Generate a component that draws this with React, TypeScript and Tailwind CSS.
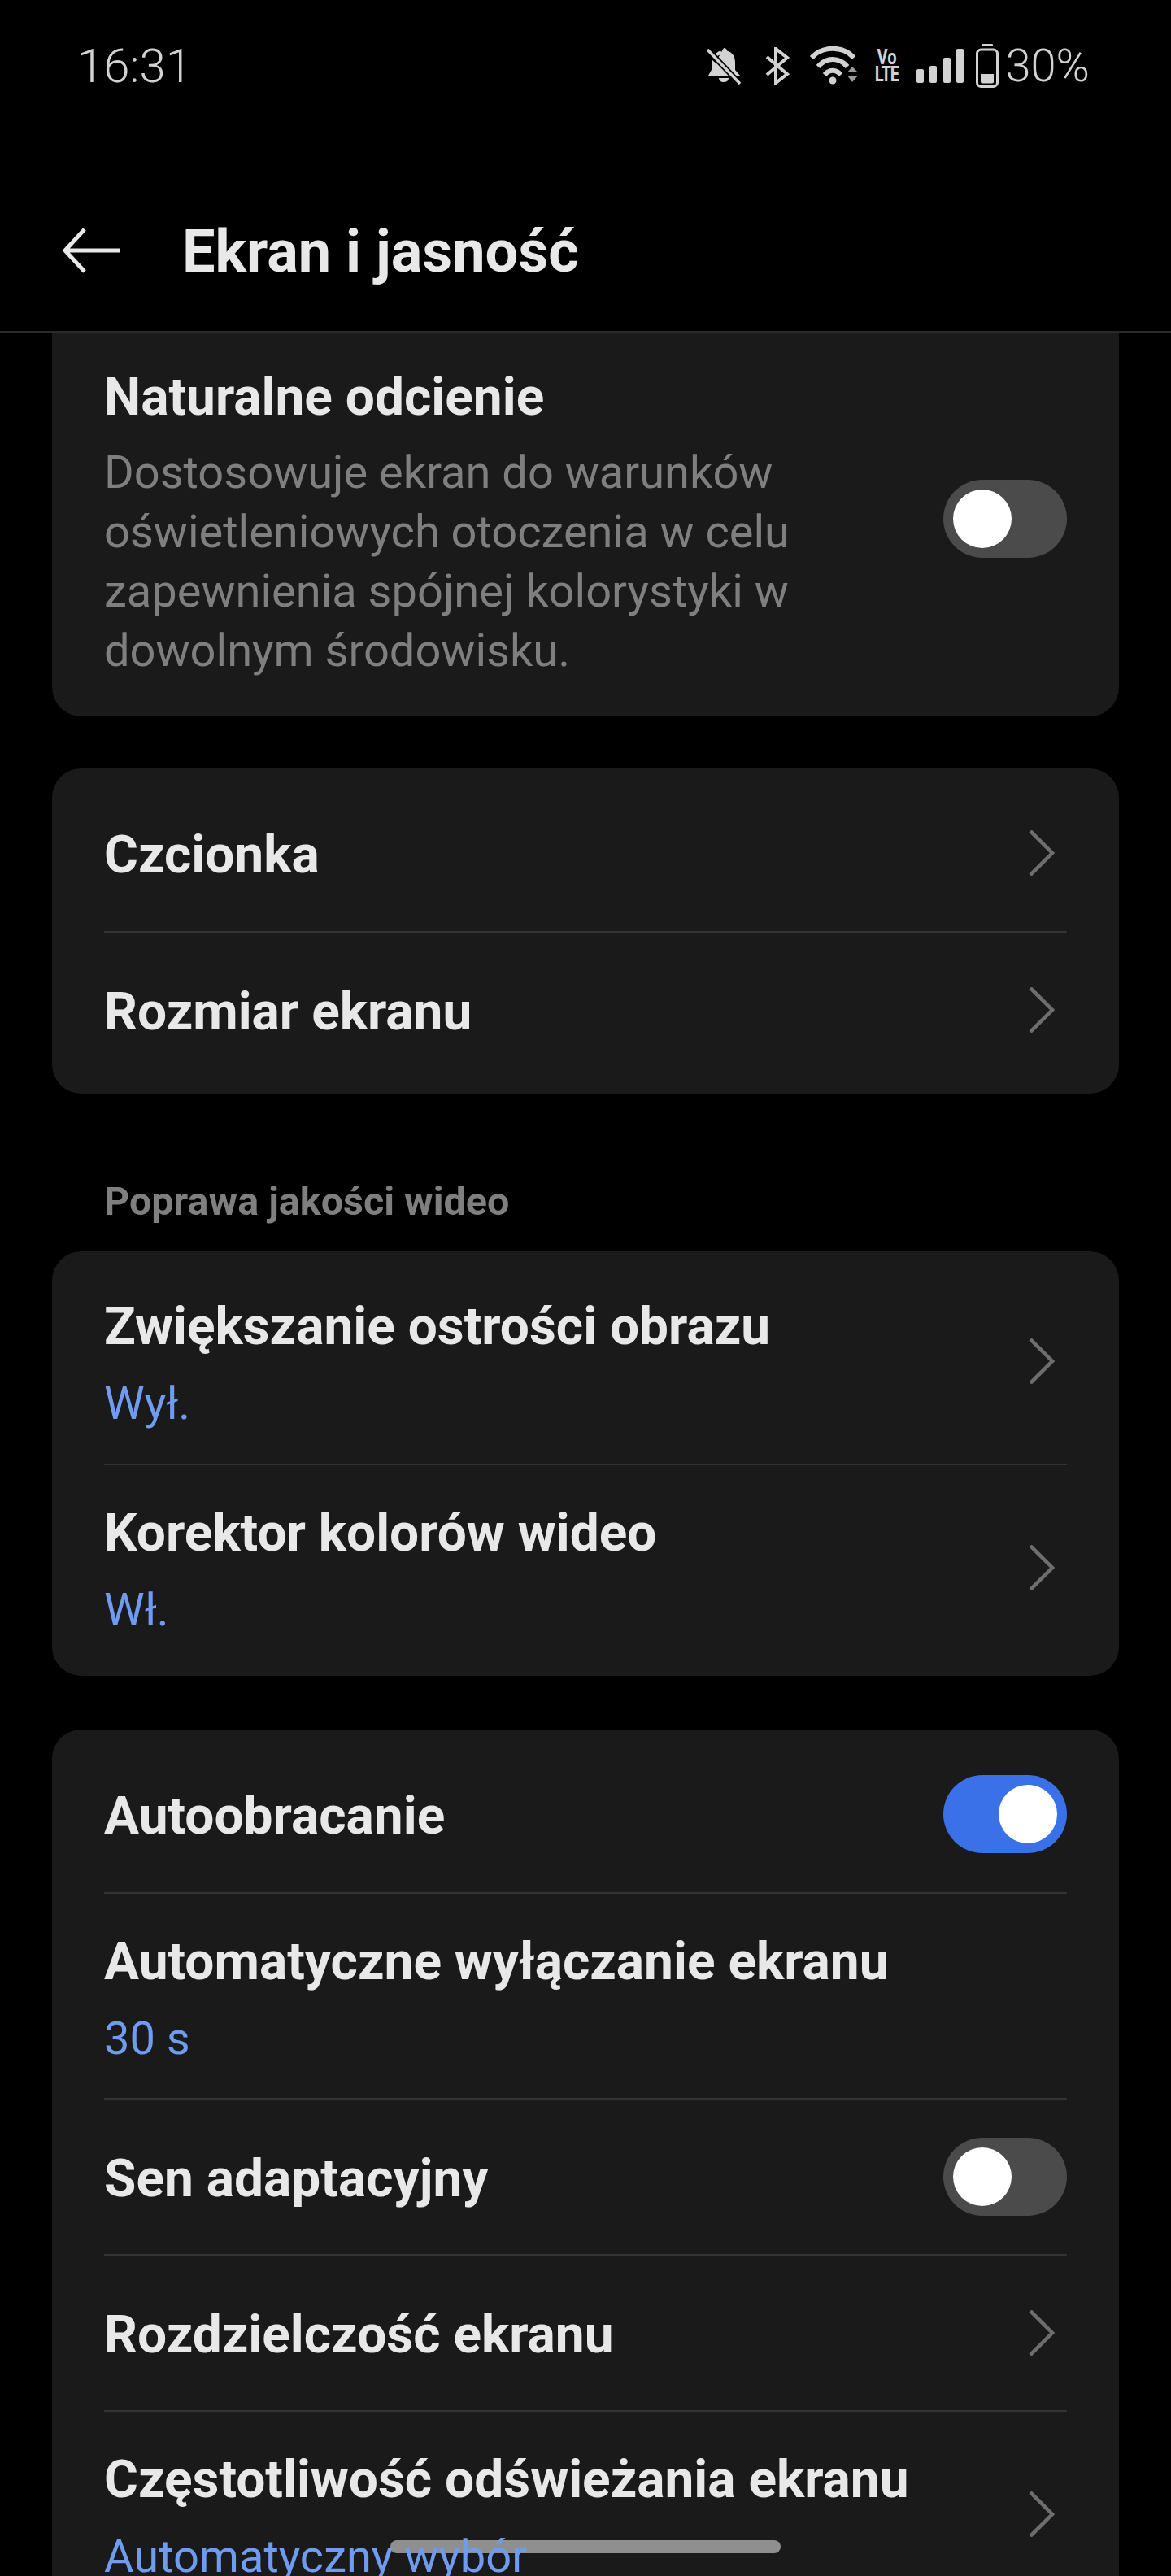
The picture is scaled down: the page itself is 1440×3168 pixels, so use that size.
const FONT = 'font-["Roboto","Noto_Sans",sans-serif]';

function Toggle({ on = false }: { on?: boolean }) {
  return (
    <div
      className={`flex h-[96px] w-[152px] shrink-0 items-center rounded-full px-[12px] ${
        on ? 'justify-end bg-[#3a71e8]' : 'justify-start bg-[#4b4b4b]'
      }`}
    >
      <div className="h-[72px] w-[72px] rounded-full bg-white" />
    </div>
  );
}

function Chevron() {
  return (
    <svg width="34" height="56" viewBox="0 0 34 56" fill="none" className="mr-[15px] shrink-0">
      <path d="M4 1 L31 28 L4 55" stroke="#6e6e6e" strokeWidth="4.5" />
    </svg>
  );
}

interface RowProps {
  title: string;
  sub?: string;
  right?: 'chevron' | 'on' | 'off' | 'none';
  first?: boolean;
}

function Row({ title, sub, right = 'chevron', first }: RowProps) {
  return (
    <div
      className={`flex items-center justify-between ${sub ? 'h-[253px]' : 'h-[192px]'} ${
        first ? '' : 'border-t-2 border-[#333333]'
      }`}
    >
      <div className={sub ? 'pt-[10px]' : 'pt-[6px]'}>
        <div className="text-[64px] leading-[76px] font-bold text-[#e8e8e8]">{title}</div>
        {sub && (
          <div className="relative z-10 mt-[20px] text-[56px] leading-[73px] text-[#6f9cf0]">{sub}</div>
        )}
      </div>
      {right === 'chevron' && <Chevron />}
      {right === 'on' && <Toggle on />}
      {right === 'off' && <Toggle />}
    </div>
  );
}

function Card({ children }: { children: React.ReactNode }) {
  return <div className="mx-[64px] rounded-[36px] bg-[#1a1a1a] px-[64px] py-2">{children}</div>;
}

function StatusIcons() {
  return (
    <div className="flex items-center text-[#d2d2d2]">
      {/* bell off */}
      <svg width="44" height="46" viewBox="0 0 44 46" className="mr-[29px]">
        <path
          d="M22 1c2.5 0 4 1.6 4 3.6C33 6.5 36 12 36 19v9l6 7H3l5-6V16L30 35H3"
          fill="#d2d2d2"
        />
        <path d="M8 14c0-1.500 4-8 10-9.500L34 24V19C34 11 30 7 26 5Z" fill="#d2d2d2" />
        <path d="M16 38h12c0 3-2.500 5-6 5s-6-2-6-5Z" fill="#d2d2d2" />
        <path d="M2 3 L42 45" stroke="#000" strokeWidth="7" />
        <path d="M2 3 L42 45" stroke="#d2d2d2" strokeWidth="3.500" />
      </svg>
      {/* bluetooth */}
      <svg width="30" height="46" viewBox="0 0 30 46" fill="none" className="mr-[25px]">
        <path d="M2 12 L27 33 L13 44 V2 L27 13 L2 34" stroke="#d2d2d2" strokeWidth="4" />
      </svg>
      {/* wifi with arrows */}
      <svg width="60" height="48" viewBox="0 0 60 48" fill="none" className="mr-[18px]">
        <path d="M2 14 C15 -1 41 -1 54 14" stroke="#d2d2d2" strokeWidth="6" />
        <path d="M10 25 C20 13 36 13 46 25" stroke="#d2d2d2" strokeWidth="6" />
        <path d="M18 35 C24 28 32 28 38 35" stroke="#d2d2d2" strokeWidth="6" />
        <circle cx="28" cy="42" r="4.500" fill="#d2d2d2" />
        <path d="M46 32 L52 25 L59 32 Z" fill="#9a9a9a" />
        <path d="M46 36 L59 36 L52 44 Z" fill="#9a9a9a" />
      </svg>
      {/* volte */}
      <div className="mr-[21px] flex w-[32px] flex-col items-center text-[20px] font-bold text-[#d2d2d2]">
        <span className="block h-[21px] scale-y-125 leading-[21px]">Vo</span>
        <span className="block h-[21px] scale-y-125 leading-[21px] tracking-[-1px]">LTE</span>
      </div>
      {/* signal */}
      <svg width="58" height="42" viewBox="0 0 58 42" className="mr-[15px]">
        <rect x="0" y="25" width="9" height="17" rx="2" fill="#d2d2d2" />
        <rect x="16" y="21" width="9" height="21" rx="2" fill="#d2d2d2" />
        <rect x="33" y="11" width="9" height="31" rx="2" fill="#d2d2d2" />
        <rect x="49" y="0" width="9" height="42" rx="2" fill="#d2d2d2" />
      </svg>
      {/* battery */}
      <svg width="28" height="54" viewBox="0 0 28 54" fill="none" className="mr-[8px]">
        <rect x="7" y="0" width="14" height="3" rx="1" fill="#d2d2d2" />
        <rect x="1.500" y="7" width="25" height="45.500" rx="5" stroke="#d2d2d2" strokeWidth="3" />
        <path d="M6 37h16v9.500a2 2 0 0 1-2 2H8a2 2 0 0 1-2-2Z" fill="#d2d2d2" />
      </svg>
      <span className="text-[56px] leading-[60px] font-light">30%</span>
    </div>
  );
}

export default function App() {
  return (
    <div className={`relative h-[3168px] w-[1440px] overflow-hidden bg-black ${FONT}`}>
      {/* status bar */}
      <div className="flex h-[160px] items-start justify-between pt-[51px] pr-[100px] pl-[95px]">
        <span className="text-[58px] leading-[60px] font-light text-[#d2d2d2]">16:31</span>
        <StatusIcons />
      </div>

      {/* header */}
      <div className="flex h-[249px] items-start border-b-2 border-[#2a2a2a]">
        <div className="flex items-center pt-[120px] pl-[76px]">
          <svg width="74" height="56" viewBox="0 0 74 56" fill="none" className="mr-[74px]">
            <path d="M72 28 H4 M28 2 L4 28 L28 54" stroke="#e8e8e8" strokeWidth="5" />
          </svg>
        </div>
        <div className="pt-[109px] text-[72px] leading-[82px] font-bold text-[#e8e8e8]">
          Ekran i jasność
        </div>
      </div>

      {/* natural tone card, scrolled under the header */}
      <div className="mx-[64px] mt-[1px] mb-[64px] rounded-b-[36px] bg-[#1a1a1a] px-[64px] pb-4">
        <div className="flex items-center justify-between">
          <div className="pt-[41px] pb-[28px]">
            <div className="text-[64px] leading-[76px] font-bold text-[#e8e8e8]">
              Naturalne odcienie
            </div>
            <div className="mt-[18px] w-[900px] text-[56px] leading-[73px] text-[#7f7f7f]">
              Dostosowuje ekran do warunków
              <br />
              oświetleniowych otoczenia w celu
              <br />
              zapewnienia spójnej kolorystyki w
              <br />
              dowolnym środowisku.
            </div>
          </div>
          <Toggle />
        </div>
      </div>

      <Card>
        <Row first title="Czcionka" />
        <Row title="Rozmiar ekranu" />
      </Card>

      <div className="h-[194px] px-[128px] pt-[102px] text-[48.5px] leading-[62px] font-bold text-[#7f7f7f]">
        Poprawa jakości wideo
      </div>

      <Card>
        <Row first title="Zwiększanie ostrości obrazu" sub="Wył." />
        <Row title="Korektor kolorów wideo" sub="Wł." />
      </Card>

      <div className="h-[66px]" />

      <Card>
        <Row first title="Autoobracanie" right="on" />
        <Row title="Automatyczne wyłączanie ekranu" sub="30 s" right="none" />
        <Row title="Sen adaptacyjny" right="off" />
        <Row title="Rozdzielczość ekranu" />
        <Row title="Częstotliwość odświeżania ekranu" sub="Automatyczny wybór" />
      </Card>

      {/* gesture pill, the last subtitle sits on top of it */}
      <div className="absolute top-[3124px] left-[480px] h-[16px] w-[480px] rounded-full bg-[#8f8f8f]" />
    </div>
  );
}
